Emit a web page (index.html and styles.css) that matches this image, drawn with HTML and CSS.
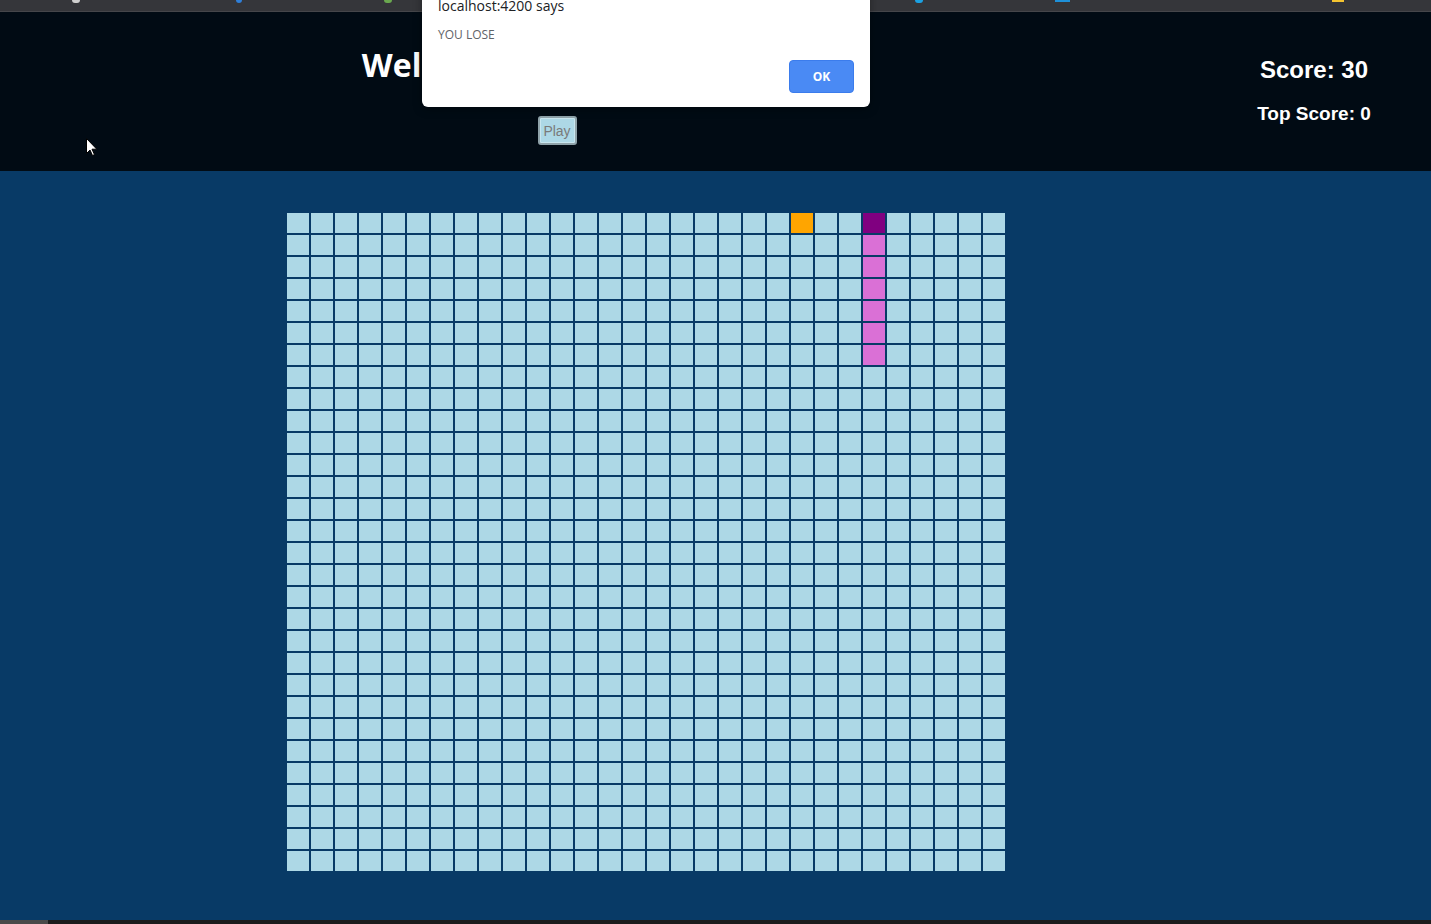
FILE: index.html
```html
<!DOCTYPE html>
<html lang="en">
<head>
<meta charset="utf-8">
<title>Snake</title>
<link rel="stylesheet" href="styles.css">
</head>
<body>
<div class="browserbar">
  <span class="bm bm-grey" style="left:72px"></span>
  <span class="bm bm-blue" style="left:236px"></span>
  <span class="bm bm-green" style="left:384px"></span>
  <span class="bm bm-cyan" style="left:915px"></span>
  <span class="bm bm-square" style="left:1055px"></span>
  <span class="bm bm-yellow" style="left:1332px"></span>
</div>
<header class="header">
  <div class="intro">
    <h1 class="title">Welcome to Snake Game</h1>
    <button class="play">Play</button>
  </div>
  <div class="scores">
    <div class="score">Score: 30</div>
    <div class="top-score">Top Score: 0</div>
  </div>
</header>
<main class="board-area">
  <div class="board" id="board"></div>
</main>
<div class="bottombar"><span class="thumb"></span></div>

<div class="dialog">
  <div class="dialog-title">localhost:4200 says</div>
  <div class="dialog-msg">YOU LOSE</div>
  <div class="dialog-actions"><button class="ok">OK</button></div>
</div>

<svg class="cursor" width="12" height="19" viewBox="0 0 12 19">
  <path d="M0.5 0.5 L0.5 15.5 L4 12 L6.5 17.5 L8.5 16.6 L6 11.2 L10.8 11.2 Z" fill="#fff" stroke="#000" stroke-width="1"/>
</svg>

<script src="app.js"></script>
</body>
</html>
```

FILE: app.js
```js
(function () {
  var board = document.getElementById('board');
  var snake = { '0,24': 'head', '1,24': 'body', '2,24': 'body', '3,24': 'body', '4,24': 'body', '5,24': 'body', '6,24': 'body' };
  var food = '0,21';
  var frag = document.createDocumentFragment();
  for (var r = 0; r < 30; r++) {
    for (var c = 0; c < 30; c++) {
      var d = document.createElement('div');
      var key = r + ',' + c;
      d.className = 'cell';
      if (snake[key] === 'head') d.className += ' head';
      else if (snake[key] === 'body') d.className += ' body';
      else if (key === food) d.className += ' food';
      frag.appendChild(d);
    }
  }
  board.appendChild(frag);
})();
```

FILE: styles.css
```css
html, body {
  margin: 0;
  padding: 0;
}
body {
  width: 1431px;
  height: 924px;
  overflow: hidden;
  background: #083a66;
  font-family: "Liberation Sans", Arial, sans-serif;
  position: relative;
}
.browserbar {
  height: 12px;
  background: #35363a;
  border-bottom: 1px solid #45464a;
  box-sizing: border-box;
  position: relative;
}
.bm {
  position: absolute;
  top: 0;
  height: 3px;
  width: 8px;
  border-radius: 0 0 4px 4px;
}
.bm-grey { background: #cfcfcf; }
.bm-blue { background: #2f7fd8; width: 6px; }
.bm-green { background: #6aa84f; }
.bm-cyan { background: #1ba1e2; }
.bm-square { background: #1e90d8; border-radius: 0; width: 15px; height: 2px; }
.bm-yellow { background: #f4c430; border-radius: 0; width: 12px; height: 2px; }

.header {
  height: 159px;
  background: #010b14;
  display: flex;
  color: #fff;
}
.intro {
  width: 1114px;
  padding-left: 4px;
  box-sizing: border-box;
  display: flex;
  flex-direction: column;
  align-items: center;
}
.title {
  margin: 31px 0 0;
  font-family: "Open Sans", "Noto Sans", sans-serif;
  font-weight: 700;
  font-size: 32px;
  line-height: 44px;
  white-space: nowrap;
}
.play {
  margin-top: 29px;
  margin-right: 4px;
  width: 39px;
  height: 29px;
  padding: 0;
  background: #add8e6;
  color: #7a7a7a;
  font-family: "Liberation Sans", Arial, sans-serif;
  font-size: 14px;
  border: 2px solid #8fa3aa;
  border-radius: 3px;
  box-shadow: inset 0 0 0 1px #c8e6ef;
}
.scores {
  margin-left: auto;
  margin-right: 17px;
  width: 200px;
  display: flex;
  flex-direction: column;
  align-items: center;
  font-weight: 700;
}
.score {
  margin-top: 44px;
  font-size: 24px;
  line-height: 28px;
}
.top-score {
  margin-top: 19px;
  font-size: 19px;
  line-height: 22px;
}

.board-area {
  height: 749px;
  padding: 42px 0 0 287px;
  box-sizing: border-box;
}
.board {
  display: grid;
  grid-template-columns: repeat(30, 22px);
  grid-auto-rows: 20px;
  gap: 2px;
  width: 718px;
}
.cell {
  background: #add8e6;
}
.cell.food { background: #ffa500; }
.cell.head { background: #800080; }
.cell.body { background: #da70d6; }

.bottombar {
  height: 4px;
  background: #1c1c1c;
  position: relative;
}
.thumb {
  position: absolute;
  left: 0;
  top: 0;
  width: 48px;
  height: 4px;
  background: #4a4a4a;
}

.dialog {
  position: absolute;
  left: 422px;
  top: -16px;
  width: 448px;
  height: 123px;
  background: #fff;
  border-radius: 0 0 6px 6px;
  box-shadow: 0 2px 10px rgba(0, 0, 0, 0.35);
  box-sizing: border-box;
  padding: 12px 16px 0 16px;
  font-family: "Open Sans", "Noto Sans", sans-serif;
}
.dialog-title {
  font-size: 14px;
  line-height: 20px;
  color: #202124;
}
.dialog-msg {
  margin-top: 11px;
  font-size: 12px;
  line-height: 16px;
  color: #5f6368;
}
.dialog-actions {
  display: flex;
  justify-content: flex-end;
  margin-top: 17px;
}
.ok {
  width: 65px;
  height: 33px;
  background: #4a8af4;
  color: #fff;
  border: 1px solid #3b7cec;
  border-radius: 4px;
  font-family: "Open Sans", "Noto Sans", sans-serif;
  font-weight: 700;
  font-size: 12px;
  padding: 0;
}
.cursor {
  position: absolute;
  left: 86px;
  top: 138px;
}
```
